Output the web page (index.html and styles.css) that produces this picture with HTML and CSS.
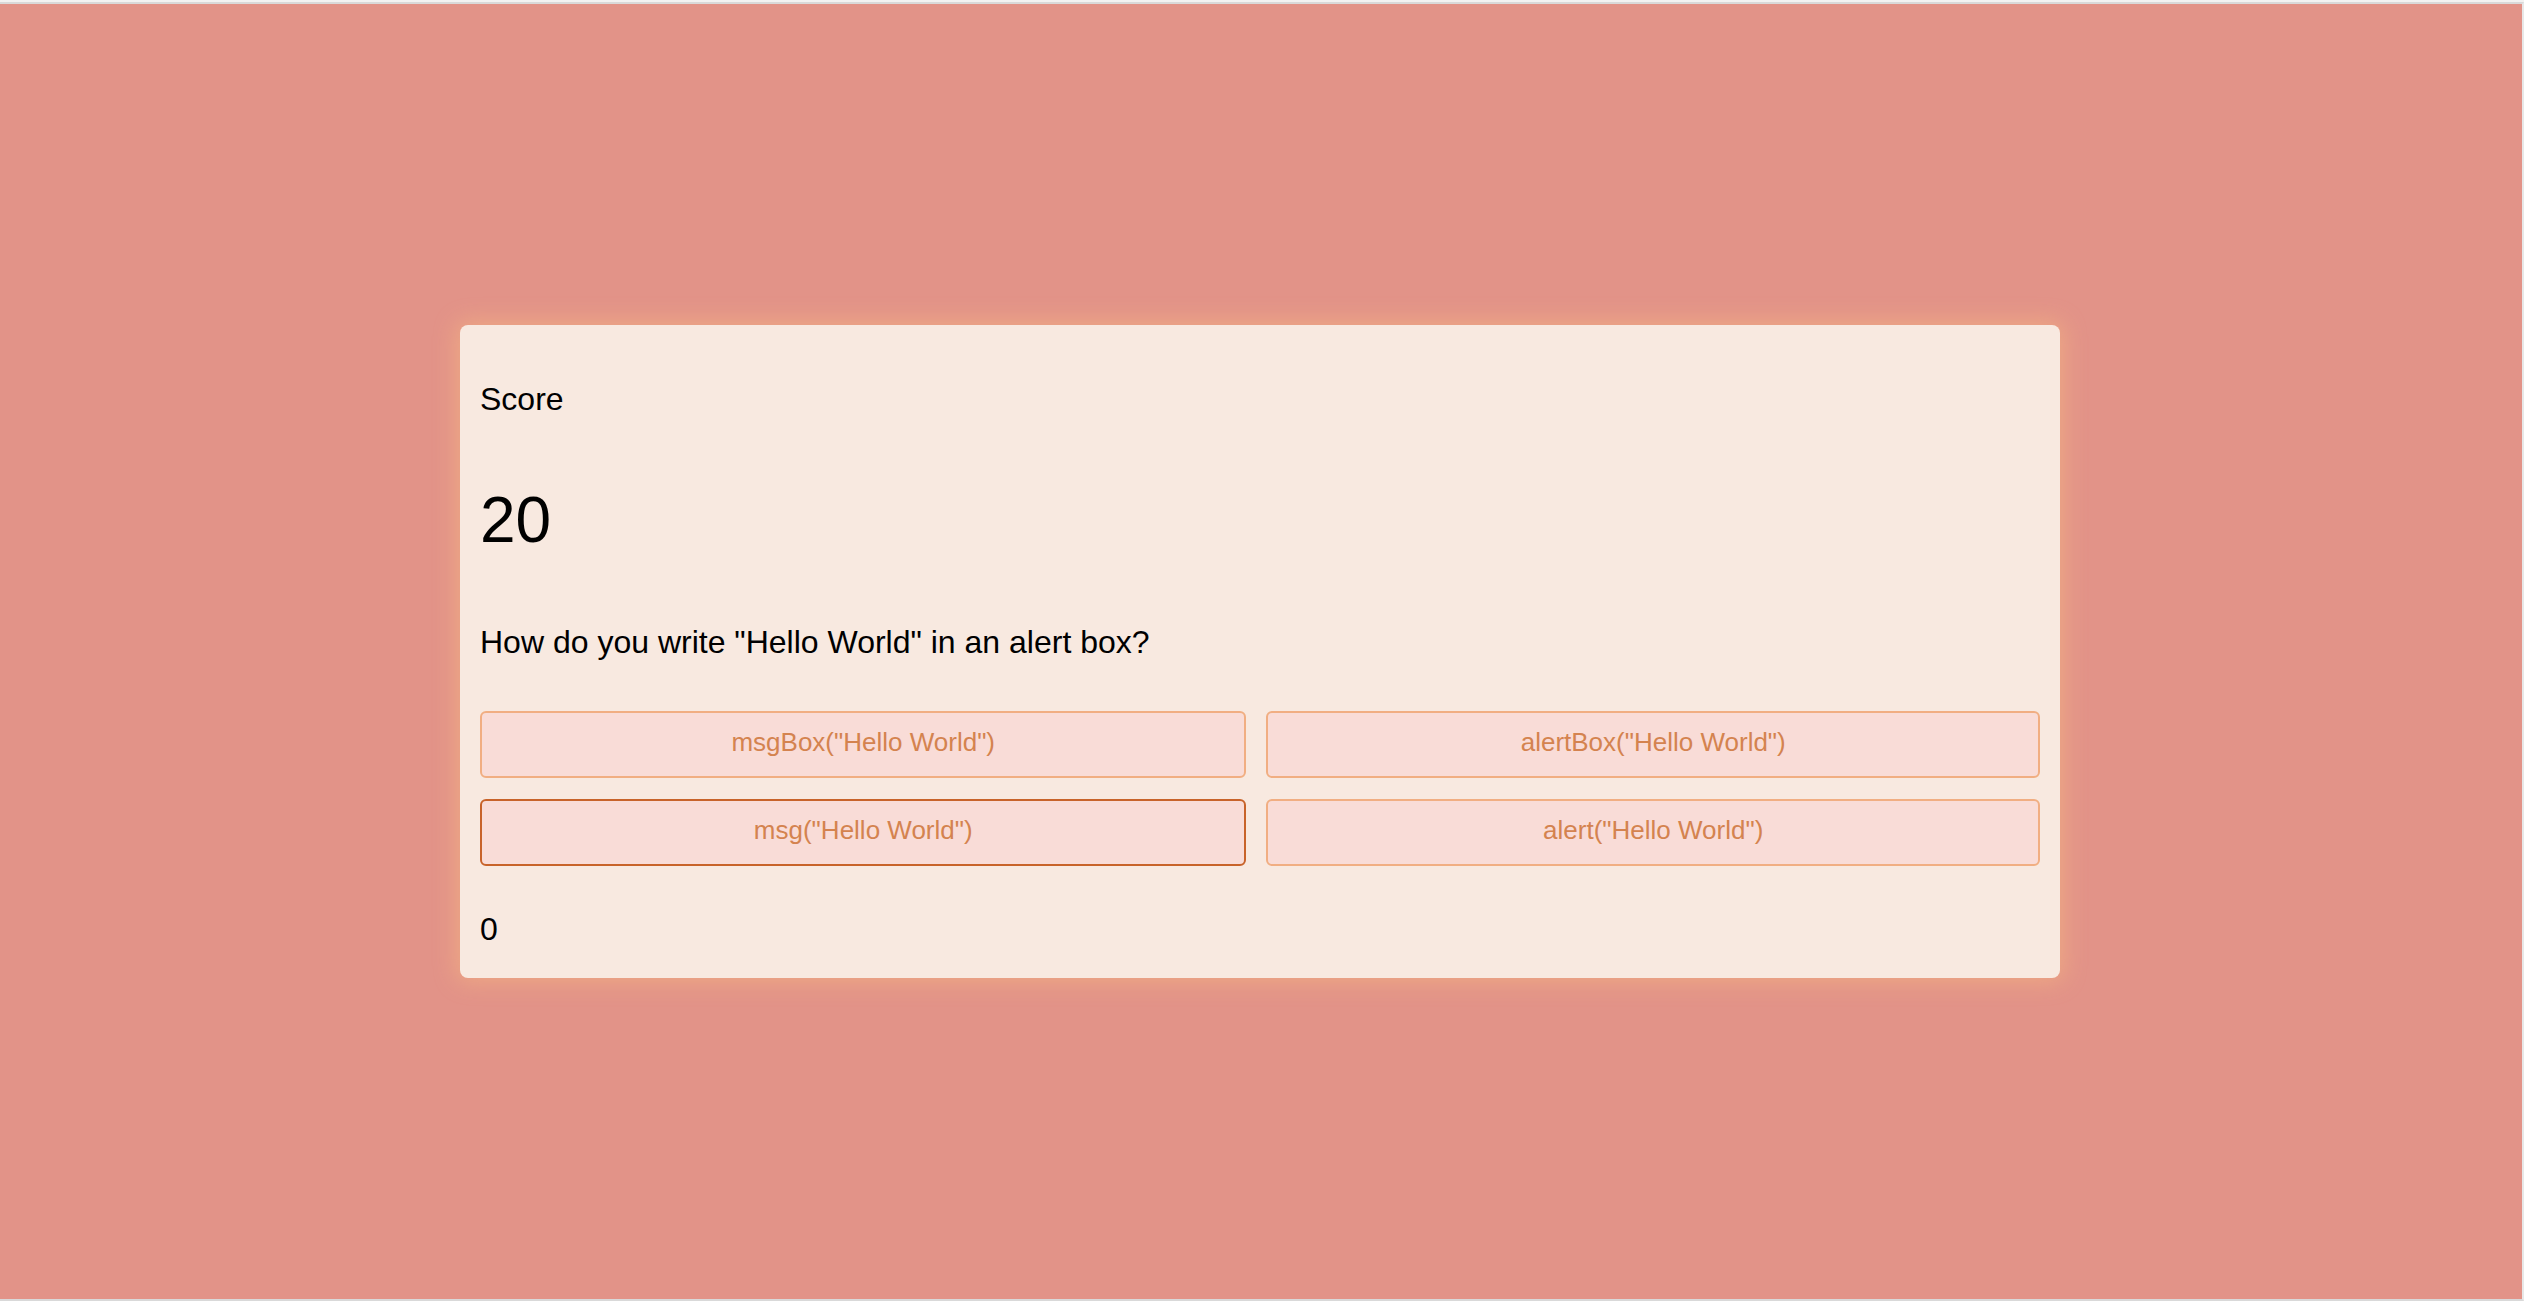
FILE: index.html
```html
<!DOCTYPE html>
<html lang="en">
<head>
<meta charset="utf-8">
<title>Quiz</title>
<link rel="stylesheet" href="styles.css">
</head>
<body>
<main class="stage">
  <section class="card">
    <p class="label">Score</p>
    <h1 class="score">20</h1>
    <p class="question">How do you write "Hello World" in an alert box?</p>
    <div class="answers">
      <button class="answer">msgBox("Hello World")</button>
      <button class="answer">alertBox("Hello World")</button>
      <button class="answer selected">msg("Hello World")</button>
      <button class="answer">alert("Hello World")</button>
    </div>
    <p class="count">0</p>
  </section>
</main>
</body>
</html>
```
FILE: styles.css
```css
html {
  background: #f2f2f2;
  height: 100%;
}
body {
  margin: 2px 0 0 0;
  height: calc(100% - 2px);
  box-sizing: border-box;
  border-top: 2px solid #d9d9d9;
  border-bottom: 2px solid #d9d9d9;
  border-right: 2px solid #e8e8e8;
  background: #e29388;
  font-family: "Liberation Sans", Arial, sans-serif;
  color: #000;
}
.stage {
  height: 100%;
  box-sizing: border-box;
  padding-right: 2px;
  display: flex;
  align-items: center;
  justify-content: center;
}
.card {
  width: 1600px;
  box-sizing: border-box;
  background: #f8e9e0;
  border-radius: 8px;
  padding: 56px 20px 30px 20px;
  box-shadow: 0 0 22px 4px #eea884;
  display: flex;
  flex-direction: column;
}
.label {
  margin: 0;
  font-size: 32px;
  font-weight: 400;
}
.score {
  margin: 65px 0 0 0;
  font-size: 64px;
  font-weight: 400;
}
.question {
  margin: 67px 0 0 0;
  font-size: 32px;
}
.answers {
  margin-top: 50px;
  display: grid;
  grid-template-columns: 766fr 773fr;
  column-gap: 20px;
  row-gap: 21px;
}
.answer {
  font-family: "Liberation Sans", Arial, sans-serif;
  font-size: 26px;
  color: #d4834f;
  background: #f9dcd7;
  border: 2px solid #f1ae82;
  border-radius: 6px;
  padding: 14px 0 19px 0;
  height: 67px;
  box-sizing: border-box;
  line-height: 30px;
  cursor: pointer;
}
.answer.selected {
  border-color: #c8632a;
}
.count {
  margin: 45px 0 0 0;
  font-size: 32px;
}
```
